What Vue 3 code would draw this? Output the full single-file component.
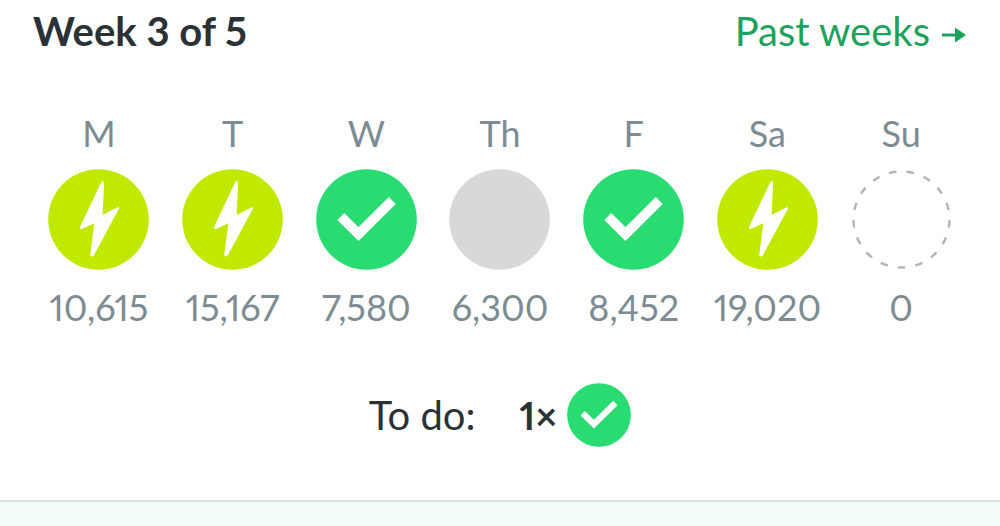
<script setup>
const days = [
  { name: 'M', steps: '10,615', state: 'bolt' },
  { name: 'T', steps: '15,167', state: 'bolt' },
  { name: 'W', steps: '7,580', state: 'check' },
  { name: 'Th', steps: '6,300', state: 'missed' },
  { name: 'F', steps: '8,452', state: 'check' },
  { name: 'Sa', steps: '19,020', state: 'bolt' },
  { name: 'Su', steps: '0', state: 'upcoming' },
]
</script>

<template>
  <main class="page">
    <section class="card">
      <header class="header">
        <h1 class="title">Week 3 of 5</h1>
        <a class="link" href="#">
          Past weeks
          <svg class="arrow" viewBox="0 0 24 16" aria-hidden="true">
            <path d="M0 8H14" fill="none" stroke="currentColor" stroke-width="3" />
            <path d="M13 0.5L24 8L13 15.5Z" fill="currentColor" />
          </svg>
        </a>
      </header>

      <ol class="days">
        <li v-for="day in days" :key="day.name" class="day">
          <span class="label">{{ day.name }}</span>
          <svg class="badge" viewBox="0 0 101 101" aria-hidden="true">
            <template v-if="day.state === 'bolt'">
              <circle cx="50.5" cy="50.5" r="50.3" fill="#c1e900" />
              <path
                d="M53.1 13.6Q54 12.1 55.2 12.3Q56.2 12.6 56.1 14L54.6 46L69.2 38.5Q71.9 37.6 70.5 40.6L46 86Q45.2 87.7 43.5 87.4Q42 87 42.3 85.3L46.3 54.3L33.8 59.9Q31 60.3 32.2 57.6Z"
                fill="#fff"
              />
            </template>
            <template v-else-if="day.state === 'check'">
              <circle cx="50.5" cy="50.5" r="50.3" fill="#28dc71" />
              <path d="M24.8 47.6L42.5 65L76.3 31.5" fill="none" stroke="#fff" stroke-width="9.8" />
            </template>
            <circle v-else-if="day.state === 'missed'" cx="50.5" cy="50.5" r="50.3" fill="#d8d8d8" />
            <circle
              v-else
              cx="50.5"
              cy="50.5"
              r="48"
              fill="none"
              stroke="#b4b4b4"
              stroke-width="2.4"
              pathLength="170"
              stroke-dasharray="4.2 5.8"
              stroke-dashoffset="2.1"
              transform="rotate(90 50.5 50.5)"
            />
          </svg>
          <span class="steps">{{ day.steps }}</span>
        </li>
      </ol>

      <div class="todo">
        <span>To do:</span>
        <span class="goal">
          <strong class="count">1×</strong>
          <svg class="goal-icon" viewBox="0 0 101 101" aria-hidden="true">
            <circle cx="50.5" cy="50.5" r="50.3" fill="#28dc71" />
            <path d="M24.8 47.6L42.5 65L76.3 31.5" fill="none" stroke="#fff" stroke-width="9.8" />
          </svg>
        </span>
      </div>
    </section>
  </main>
</template>

<style>
body {
  margin: 0;
  background: #f3fcf7;
}
</style>

<style scoped>
.page {
  font-family: Lato, "Open Sans", sans-serif;
  font-size: 40px;
  line-height: 44px;
  font-variant-numeric: proportional-nums;
  color: #2a3236;
}
.card {
  padding: 9px 32px 53px;
  background: #fff;
  border-bottom: 2px solid #dcdfde;
}
.header {
  display: flex;
  justify-content: space-between;
  align-items: center;
  padding: 0 2px 0 1px;
}
.title {
  margin: 0;
  font-size: 40px;
  font-weight: 700;
}
.link {
  display: flex;
  align-items: center;
  gap: 12px;
  color: #1ba35b;
  text-decoration: none;
}
.arrow {
  width: 24px;
  height: 16px;
  margin-top: 7px;
}
.days {
  display: grid;
  grid-template-columns: repeat(7, 1fr);
  margin: 58px 0 0;
  padding: 0;
  list-style: none;
  font-size: 36px;
  color: #7c8c92;
}
.day {
  display: flex;
  flex-direction: column;
  align-items: center;
}
.badge {
  width: 101px;
  height: 101px;
  margin: 14px 0 15px;
}
.todo {
  display: flex;
  justify-content: center;
  align-items: center;
  gap: 44px;
  margin-top: 54px;
}
.goal {
  display: flex;
  align-items: center;
  gap: 10px;
}
.count {
  font-size: 38px;
}
.goal-icon {
  width: 64px;
  height: 64px;
}
</style>
